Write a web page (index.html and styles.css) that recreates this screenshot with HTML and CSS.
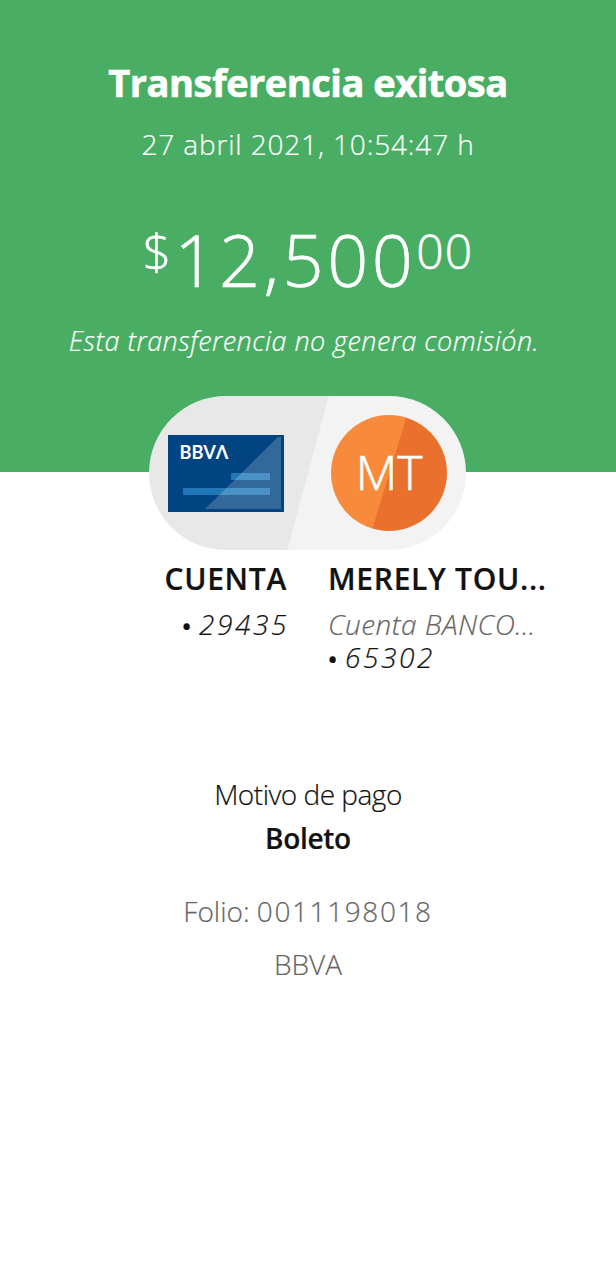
FILE: index.html
```html
<!DOCTYPE html>
<html lang="es">

<head>
    <meta charset="UTF-8">
    <meta name="viewport" content="width=device-width, initial-scale=1.0">
    <title>Transferencia exitosa</title>
    <link rel="stylesheet" href="styles.css">
</head>

<body>
    <header class="header">
        <h1 class="title">Transferencia exitosa</h1>
        <p class="date">27 abril 2021, 10:54:47 h</p>
        <p class="amount"><span class="currency">$</span><span class="integer">12,500</span><span class="cents">00</span></p>
        <p class="note">Esta transferencia no genera comisión.</p>
    </header>

    <main>
        <div class="pill">
            <svg class="card" viewBox="0 0 116 77">
                <rect width="116" height="77" fill="#004481" />
                <rect x="63" y="38" width="39" height="7" fill="#1f77b8" />
                <rect x="15" y="53" width="87" height="7" fill="#1f77b8" />
                <path d="M110 2H113V74H37Z" fill="#fff" fill-opacity=".2" />
                <text class="brand" x="11.5" y="24" textLength="49" lengthAdjust="spacingAndGlyphs">BBVΛ</text>
            </svg>
            <div class="avatar">MT</div>
        </div>

        <section class="accounts">
            <div class="account origin">
                <h2 class="name">CUENTA</h2>
                <p class="number"><span class="dot">•</span>29435</p>
            </div>
            <div class="account target">
                <h2 class="name">MERELY TOU...</h2>
                <p class="bank">Cuenta BANCO...</p>
                <p class="number"><span class="dot">•</span>65302</p>
            </div>
        </section>

        <section class="reason">
            <p class="label">Motivo de pago</p>
            <p class="value">Boleto</p>
        </section>

        <section class="details">
            <p class="folio">Folio: <span class="digits">0011198018</span></p>
            <p class="issuer">BBVA</p>
        </section>
    </main>
</body>

</html>
```
FILE: styles.css
```css
* {
    margin: 0;
    padding: 0;
    box-sizing: border-box;
}

body {
    min-height: 1280px;
    background: #fff;
    color: #121212;
    font-family: "Open Sans", "Noto Sans", sans-serif;
    font-size: 28px;
    font-weight: 300;
    text-align: center;
    -webkit-text-stroke: 0.2px;
}

.header {
    height: 472px;
    padding-top: 57px;
    background: #49ae64;
    color: #fff;
}

.title {
    font-size: 38px;
    font-weight: 700;
    letter-spacing: -0.5px;
    line-height: 50px;
    -webkit-text-stroke: 0.6px;
}

.date {
    margin-top: 20px;
    letter-spacing: 0.85px;
    line-height: 34px;
}

.amount {
    display: flex;
    justify-content: center;
    margin-top: 58px;
    font-size: 72px;
    line-height: 80px;
    -webkit-text-stroke: 0.6px;
}

.currency {
    margin-right: 3px;
    font-size: 50px;
    line-height: 64px;
}

.integer {
    letter-spacing: 3.5px;
}

.cents {
    font-size: 48px;
    letter-spacing: 1px;
    line-height: 64px;
}

.note {
    margin-top: 24px;
    padding-right: 8px;
    font-size: 27px;
    font-style: italic;
    letter-spacing: 0.45px;
    line-height: 36px;
}

.pill {
    display: flex;
    align-items: center;
    justify-content: space-between;
    width: 317px;
    height: 154px;
    margin: -76px auto 0 149px;
    padding: 0 19px;
    border-radius: 77px;
    background: linear-gradient(105deg, #e8e8e8 50%, #f3f3f3 50.3%);
}

.card {
    width: 116px;
    height: 77px;
}

.brand {
    fill: #fff;
    font-family: Lato, sans-serif;
    font-size: 18px;
    font-weight: 700;
}

.avatar {
    width: 116px;
    height: 116px;
    border-radius: 50%;
    background: linear-gradient(107deg, #f78b3b 50%, #e9712d 50.5%);
    color: #fff;
    font-size: 48px;
    line-height: 114px;
    -webkit-text-stroke: 0.7px;
}

.accounts {
    display: grid;
    grid-template-columns: 287px 230px;
    column-gap: 41px;
    margin-top: 9px;
}

.origin {
    text-align: right;
}

.target {
    text-align: left;
}

.name {
    margin-bottom: 9px;
    font-size: 30px;
    font-weight: 600;
    letter-spacing: 0.7px;
    line-height: 40px;
    white-space: nowrap;
}

.bank,
.number {
    font-style: italic;
    line-height: 33px;
    white-space: nowrap;
}

.bank {
    color: #666;
    letter-spacing: 0.45px;
}

.number {
    letter-spacing: 2.6px;
}

.origin .number {
    margin-right: -2px;
}

.dot {
    margin-right: 6px;
    font-size: 22px;
    font-weight: 700;
    line-height: 1;
}

.reason {
    margin-top: 98px;
    line-height: 44px;
}

.label {
    letter-spacing: -0.5px;
}

.value {
    font-weight: 600;
    letter-spacing: -0.3px;
}

.details {
    margin-top: 25px;
    color: #666;
    line-height: 53px;
}

.digits {
    letter-spacing: 1.6px;
}
```
